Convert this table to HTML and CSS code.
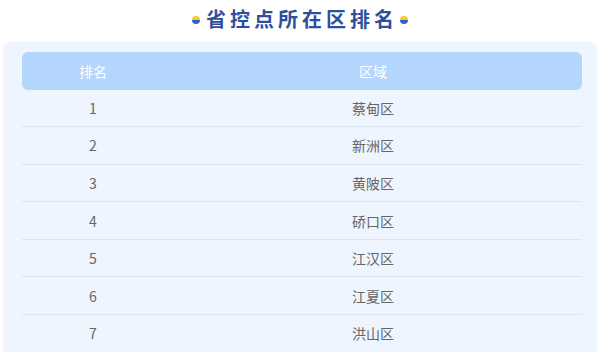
FILE: index.html
```html
<!DOCTYPE html>
<html lang="zh">
<head>
<meta charset="utf-8">
<link rel="stylesheet" href="styles.css">
</head>
<body>
<div class="page">
  <h1 class="title"><span class="dot"></span><span class="title-text">省控点所在区排名</span><span class="dot"></span></h1>
  <div class="card">
    <div class="table">
      <div class="head"><div class="c1">排名</div><div class="c2">区域</div></div>
      <div class="row"><div class="c1">1</div><div class="c2">蔡甸区</div></div>
      <div class="row"><div class="c1">2</div><div class="c2">新洲区</div></div>
      <div class="row"><div class="c1">3</div><div class="c2">黄陂区</div></div>
      <div class="row"><div class="c1">4</div><div class="c2">硚口区</div></div>
      <div class="row"><div class="c1">5</div><div class="c2">江汉区</div></div>
      <div class="row"><div class="c1">6</div><div class="c2">江夏区</div></div>
      <div class="row"><div class="c1">7</div><div class="c2">洪山区</div></div>
    </div>
  </div>
</div>
</body>
</html>
```
FILE: styles.css
```css
html, body { margin: 0; padding: 0; background: #fff; }
body { font-family: "Noto Sans CJK SC", "Noto Sans", sans-serif; width: 600px; height: 352px; overflow: hidden; }
.page { padding: 0 3px; }
.title {
  margin: 0;
  height: 42px;
  display: flex;
  align-items: center;
  justify-content: center;
  gap: 6px;
  font-size: 20px;
  font-weight: 700;
  color: #2e4f9e;
  letter-spacing: 4px;
  padding-bottom: 6px;
  box-sizing: border-box;
}
.title-text { margin-right: -4px; }
.dot {
  width: 8px; height: 8px; border-radius: 50%;
  background: linear-gradient(#f5cd2a 0 45%, #2e62c9 55% 100%);
  margin-top: 4px;
}
.card {
  background: #eef5fe;
  border-radius: 7px 7px 0 0;
  padding: 10px 15px 0 19px;
  height: 320px;
  box-sizing: border-box;
}
.table { display: flex; flex-direction: column; }
.head, .row { display: grid; grid-template-columns: 142px 1fr; align-items: center; text-align: center; }
.head {
  height: 37.5px;
  background: #b4d6fd;
  border-radius: 6px;
  color: #fff;
  font-size: 14px;
}
.row {
  height: 36.6px;
  border-bottom: 1px solid #d9e5f1;
  color: #666;
  font-size: 14px;
}
```
